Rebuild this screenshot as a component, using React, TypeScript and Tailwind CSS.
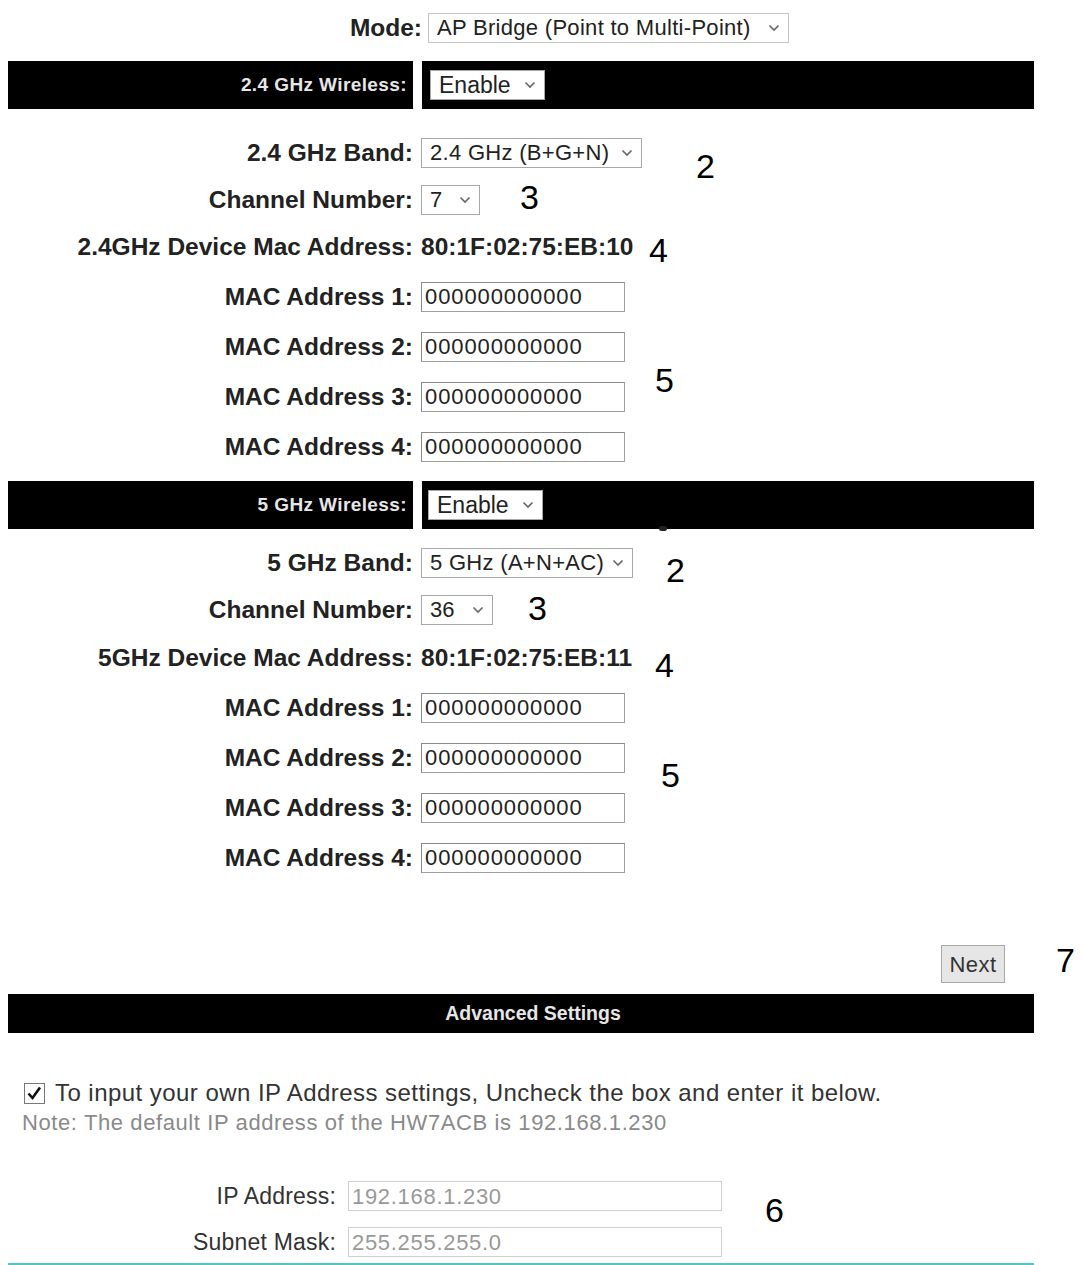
import React from 'react'

function Chevron() {
  return (
    <svg width="12" height="8" viewBox="0 0 12 8" className="shrink-0">
      <path d="M1.5 1.5 L6 6 L10.5 1.5" fill="none" stroke="#666" strokeWidth="1.6" />
    </svg>
  )
}

function Select({ text, className }: { text: string; className: string }) {
  return (
    <div className={`flex items-center justify-between border border-[#a8a8a8] bg-white pl-2 pr-2 text-[#222] ${className}`}>
      <span className="whitespace-nowrap leading-none">{text}</span>
      <Chevron />
    </div>
  )
}

function Field({ value }: { value: string }) {
  return (
    <div className="flex h-[30px] w-[204px] items-center border border-[#a0a0a0] border-t-[#888] border-l-[#888] bg-white pl-[3px] text-[22px] leading-none tracking-[0.9px] text-[#222]">
      {value}
    </div>
  )
}

function Row({ label, h, children }: { label: string; h: string; children: React.ReactNode }) {
  return (
    <div className={`grid grid-cols-[405px_1fr] items-center gap-x-2 ${h}`}>
      <div className="text-right text-[24.5px] font-bold whitespace-nowrap text-[#222]">{label}</div>
      <div className="flex items-center">{children}</div>
    </div>
  )
}

function Bar({ label, selectClass }: { label: string; selectClass: string }) {
  return (
    <div className="flex h-12 w-[1026px]">
      <div className="flex w-[405px] items-center justify-end bg-black pr-[6px] text-[19px] font-bold tracking-[0.4px] text-[#e6e6e6]">
        {label}
      </div>
      <div className="w-[9px] bg-white" />
      <div className="flex flex-1 items-center bg-black">
        <Select text="Enable" className={`h-[30px] w-[115px] text-[23px] ${selectClass}`} />
      </div>
    </div>
  )
}

function Note({ n, className }: { n: string; className: string }) {
  return <div className={`absolute text-[34px] leading-10 text-black ${className}`}>{n}</div>
}

function MacRows() {
  return (
    <>
      {[1, 2, 3, 4].map((i) => (
        <Row key={i} label={`MAC Address ${i}:`} h="h-[50px]">
          <Field value="000000000000" />
        </Row>
      ))}
    </>
  )
}

export default function App() {
  return (
    <div className="relative h-[1265px] w-[1081px] overflow-hidden bg-white pl-2 font-['Liberation_Sans',Arial,sans-serif]">
      {/* mode */}
      <div className="flex h-[56px] items-center">
        <div className="w-[414px] text-right text-[24.5px] font-bold text-[#222]">Mode:</div>
        <div className="ml-[6px]">
          <Select
            text="AP Bridge (Point to Multi-Point)"
            className="h-[30px] w-[361px] border-[#c4c4c4] text-[22px] tracking-[0.3px]"
          />
        </div>
      </div>
      <div className="h-[5px]" />

      <Bar label="2.4 GHz Wireless:" selectClass="ml-2" />

      <div className="h-5" />
      <Row label="2.4 GHz Band:" h="h-12">
        <Select text="2.4 GHz (B+G+N)" className="h-[30px] w-[221px] text-[22px] tracking-[0.3px]" />
      </Row>
      <Row label="Channel Number:" h="h-[46px]">
        <Select text="7" className="h-[30px] w-[59px] text-[22px]" />
      </Row>
      <Row label="2.4GHz Device Mac Address:" h="h-[49px]">
        <span className="text-[24.5px] font-bold text-[#222]">80:1F:02:75:EB:10</span>
      </Row>
      <MacRows />

      <div className="h-[9px]" />
      <Bar label="5 GHz Wireless:" selectClass="ml-[6px]" />

      <div className="h-[10px]" />
      <Row label="5 GHz Band:" h="h-12">
        <Select text="5 GHz (A+N+AC)" className="h-[30px] w-[212px] text-[22px] tracking-[0.3px]" />
      </Row>
      <Row label="Channel Number:" h="h-[46px]">
        <Select text="36" className="h-[30px] w-[72px] text-[22px]" />
      </Row>
      <Row label="5GHz Device Mac Address:" h="h-[50px]">
        <span className="text-[24.5px] font-bold text-[#222]">80:1F:02:75:EB:11</span>
      </Row>
      <MacRows />

      <div className="flex w-[1026px] justify-end pt-[62px] pr-[29px]">
        <button className="h-[38px] w-[64px] border border-[#a8a8a8] bg-[#e6e6e6] text-[22px] tracking-[0.4px] text-[#333]">
          Next
        </button>
      </div>

      <div className="mt-[11px] flex h-[39px] w-[1026px] items-center justify-center bg-black pl-6 text-[19.5px] font-bold text-[#e6e6e6]">
        Advanced Settings
      </div>

      <div className="mt-[46px] flex items-center pl-4">
        <svg width="21" height="21" viewBox="0 0 21 21" className="shrink-0">
          <rect x="0.5" y="0.5" width="20" height="20" fill="#fff" stroke="#777" />
          <path d="M4.5 10.5 L8.5 15 L16 4.5" fill="none" stroke="#111" strokeWidth="2.6" />
        </svg>
        <span className="ml-[10px] text-[24px] leading-7 tracking-[0.45px] text-[#333]">
          To input your own IP Address settings, Uncheck the box and enter it below.
        </span>
      </div>
      <div className="pt-[2px] pl-[14px] text-[22px] leading-7 tracking-[0.6px] text-[#8a8a8a]">
        Note: The default IP address of the HW7ACB is 192.168.1.230
      </div>

      <div className="mt-[44px] flex flex-col gap-4">
        <div className="flex h-[30px] items-center">
          <div className="w-[328px] text-right text-[23px] tracking-[0.2px] text-[#333]">IP Address:</div>
          <div className="ml-3 flex h-[30px] w-[374px] items-center border border-[#d0d0d0] pl-[3px] text-[22px] tracking-[0.7px] text-[#999]">
            192.168.1.230
          </div>
        </div>
        <div className="flex h-[30px] items-center">
          <div className="w-[328px] text-right text-[23px] tracking-[0.2px] text-[#333]">Subnet Mask:</div>
          <div className="ml-3 flex h-[30px] w-[374px] items-center border border-[#d0d0d0] pl-[3px] text-[22px] tracking-[0.7px] text-[#999]">
            255.255.255.0
          </div>
        </div>
      </div>
      <div className="mt-[6px] h-[3px] w-[1026px] bg-[#52c4c4]" />

      <Note n="2" className="left-[696px] top-[146px]" />
      <Note n="3" className="left-[520px] top-[177px]" />
      <Note n="4" className="left-[649px] top-[230px]" />
      <Note n="5" className="left-[655px] top-[360px]" />
      <Note n="2" className="left-[666px] top-[550px]" />
      <Note n="3" className="left-[528px] top-[588px]" />
      <Note n="4" className="left-[655px] top-[645px]" />
      <Note n="5" className="left-[661px] top-[755px]" />
      <Note n="7" className="left-[1056px] top-[940px]" />
      <Note n="6" className="left-[765px] top-[1190px]" />
      <div className="absolute left-[659px] top-[526px] h-[5px] w-[8px] rounded-full bg-[#222]" />
    </div>
  )
}
